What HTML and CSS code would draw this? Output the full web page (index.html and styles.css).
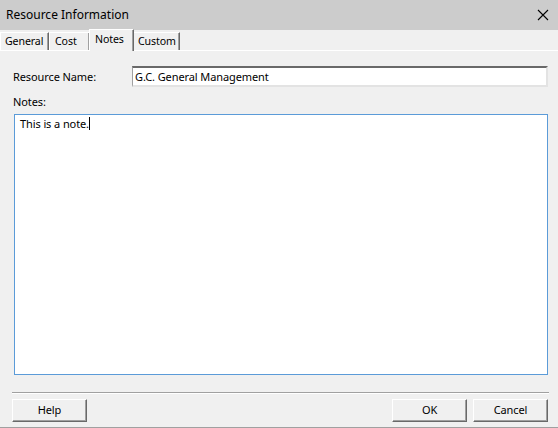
FILE: index.html
```html
<!DOCTYPE html>
<html>
<head>
<meta charset="utf-8">
<link rel="stylesheet" href="styles.css">
</head>
<body>
<div class="window">
  <div class="titlebar">
    <span class="title">Resource Information</span>
    <svg class="close" width="12" height="12" viewBox="0 0 12 12"><path d="M1 1 L11 11 M11 1 L1 11" stroke="#000" stroke-width="1.1" fill="none"/></svg>
  </div>
  <div class="tabstrip">
    <div class="tab tab-general">General</div>
    <div class="tab tab-cost">Cost</div>
    <div class="tab tab-active">Notes</div>
    <div class="tab tab-custom">Custom</div>
  </div>
  <div class="panel">
    <div class="row-name">
      <label class="lbl">Resource Name:</label>
      <div class="input">G.C. General Management</div>
    </div>
    <div class="lbl notes-lbl">Notes:</div>
    <div class="notes">This is a note.<span class="caret"></span></div>
  </div>
  <div class="separator"></div>
  <div class="footer">
    <div class="btn">Help</div>
    <div class="spacer"></div>
    <div class="btn">OK</div>
    <div class="btn">Cancel</div>
  </div>
</div>
</body>
</html>
```

FILE: styles.css
```css
html, body {
  margin: 0;
  padding: 0;
  background: #f0f0f0;
}
.window {
  width: 558px;
  height: 428px;
  display: flex;
  flex-direction: column;
  background: #f0f0f0;
  font-family: "Noto Sans", "Open Sans", sans-serif;
  font-size: 11px;
  letter-spacing: -0.1px;
  color: #000;
  box-sizing: border-box;
  border-bottom: 1px solid #a0a0a0;
  overflow: hidden;
}
.titlebar {
  height: 30px;
  flex: none;
  background: #cccccc;
  display: flex;
  align-items: center;
  padding: 0 9px 0 6px;
  justify-content: space-between;
}
.title {
  font-size: 12px;
  letter-spacing: 0;
  margin-top: -1px;
}
.close {
  display: block;
}
.tabstrip {
  height: 20px;
  flex: none;
  display: flex;
  align-items: flex-end;
  border-bottom: 1px solid #ffffff;
  position: relative;
  font-size: 10.6px;
}
.tab {
  height: 18px;
  box-sizing: border-box;
  border-top: 1px solid #ffffff;
  border-left: 1px solid #ffffff;
  border-right: 1px solid #696969;
  box-shadow: inset -1px 0 0 #a0a0a0;
  line-height: 17px;
  padding: 0 4px;
  background: #f0f0f0;
  white-space: nowrap;
}
.tab-general { width: 49px; padding-left: 4px; }
.tab-cost { width: 41px; padding-left: 5px; }
.tab-active {
  width: 45px;
  height: 22px;
  margin-bottom: -1px;
  margin-left: -1px;
  margin-right: -1px;
  padding-left: 5px;
  line-height: 19px;
  position: relative;
  z-index: 1;
}
.tab-custom { width: 47px; padding-left: 4px; }
.panel {
  flex: 1;
  padding: 15px 10px 0 13px;
  display: flex;
  flex-direction: column;
}
.row-name {
  display: flex;
  align-items: center;
  height: 21px;
}
.lbl {
  width: 119px;
}
.input {
  flex: 1;
  height: 21px;
  box-sizing: border-box;
  background: #fff;
  border-top: 2px solid #696969;
  border-left: 1px solid #a0a0a0;
  border-right: 2px solid #e3e3e3;
  border-bottom: 2px solid #e3e3e3;
  padding-left: 2px;
  line-height: 17px;
}
.notes-lbl {
  margin-top: 7px;
  height: 20px;
  line-height: 15px;
}
.notes {
  margin-left: 1px;
  height: 261px;
  box-sizing: border-box;
  border: 1px solid #5b9bd8;
  background: #fff;
  padding: 1px 5px;
  line-height: 15px;
}
.caret {
  display: inline-block;
  width: 1px;
  height: 13px;
  background: #000;
  vertical-align: -2px;
}
.separator {
  margin: 0 9px 0 12px;
  height: 1px;
  background: #a0a0a0;
  border-bottom: 1px solid #fff;
  flex: none;
}
.footer {
  flex: none;
  display: flex;
  padding: 5px 10px 5px 12px;
  gap: 6px;
}
.spacer { flex: 1; }
.btn {
  width: 75px;
  height: 23px;
  box-sizing: border-box;
  border-top: 1px solid #ffffff;
  border-left: 1px solid #ffffff;
  border-right: 1px solid #696969;
  border-bottom: 1px solid #696969;
  box-shadow: inset -1px -1px 0 #a0a0a0;
  text-align: center;
  line-height: 20px;
  background: #f0f0f0;
}
```
